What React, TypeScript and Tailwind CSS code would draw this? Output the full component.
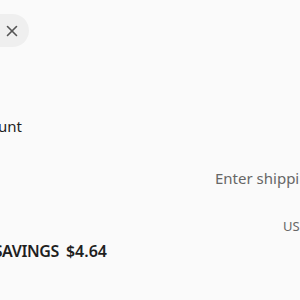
export default function App() {
    return (
        <div className="h-[300px] w-[300px] overflow-hidden bg-[#fafafa] font-['Noto_Sans',sans-serif] text-[#1f1f1f]">
            <div className="pt-[14px]">
                <button className="-ml-[31px] flex h-[33px] w-[60px] items-center justify-end rounded-full bg-[#efefef] pr-[11px] text-[#555]">
                    <svg width="12" height="12" viewBox="0 0 12 12" fill="none" stroke="currentColor" strokeWidth="1.6" strokeLinecap="round">
                        <line x1="1.5" y1="1.5" x2="10.5" y2="10.5" />
                        <line x1="10.5" y1="1.5" x2="1.5" y2="10.5" />
                    </svg>
                </button>
            </div>
            <div className="mt-[69px] flex w-[22px] justify-end whitespace-nowrap text-[15px] leading-[20px]">
                Discount
            </div>
            <div className="mt-[32px] whitespace-nowrap pl-[215px] text-[15px] leading-[20px] text-[#666]">
                Enter shipping address
            </div>
            <div className="mt-[30px] whitespace-nowrap pl-[283px] text-[13px] leading-[16px] text-[#666]">
                USD
            </div>
            <div className="mt-[6px] flex w-[107px] justify-end gap-[7px] whitespace-nowrap text-[16px] font-semibold leading-[22px]">
                <span className="tracking-[-0.4px]">TOTAL SAVINGS</span>
                <span>$4.64</span>
            </div>
        </div>
    )
}
